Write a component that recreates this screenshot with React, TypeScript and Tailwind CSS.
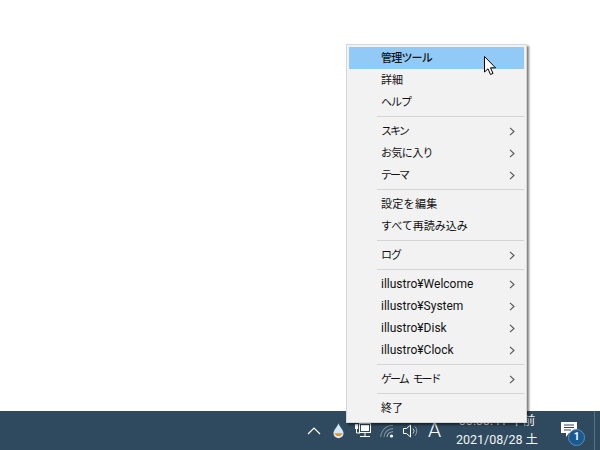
const FONT = "font-['Roboto','Noto_Sans_CJK_JP',sans-serif]";

type Item = { t: string; sub?: boolean; hl?: boolean; lat?: boolean; track?: string } | null;

const items: Item[] = [
  { t: "管理ツール", hl: true, track: "tracking-[-0.8px]" },
  { t: "詳細" },
  { t: "ヘルプ", track: "tracking-[-1px]" },
  null,
  { t: "スキン", sub: true, track: "tracking-[-2px]" },
  { t: "お気に入り", sub: true, track: "tracking-[-0.6px]" },
  { t: "テーマ", sub: true, track: "tracking-[-2px]" },
  null,
  { t: "設定を編集", track: "tracking-[0.3px]" },
  { t: "すべて再読み込み" },
  null,
  { t: "ログ", sub: true, track: "tracking-[-1px]" },
  null,
  { t: "illustro¥Welcome", sub: true, lat: true },
  { t: "illustro¥System", sub: true, lat: true },
  { t: "illustro¥Disk", sub: true, lat: true },
  { t: "illustro¥Clock", sub: true, lat: true },
  null,
  { t: "ゲーム モード", sub: true, track: "tracking-[-2px] [word-spacing:4px]" },
  null,
  { t: "終了" },
];

function Chevron() {
  return (
    <svg width="6" height="9" viewBox="0 0 6 9" fill="none" className="mr-[9px] shrink-0">
      <path d="M1 .8 L5 4.5 L1 8.2" stroke="#555" strokeWidth="1.1" />
    </svg>
  );
}

function Menu() {
  return (
    <div className="absolute left-[346px] top-[44px] w-[181px] h-[379px] bg-[#f2f2f2] border border-[#d6d6d6] p-[2px] shadow-[2px_2px_2px_rgba(0,0,0,0.5)] text-[#111]">
      {items.map((it, i) =>
        it === null ? (
          <div key={i} className="h-[7px] flex items-center pl-[28px]">
            <div className="h-px w-full bg-[#d4d4d4]" />
          </div>
        ) : (
          <div
            key={i}
            className={`h-[22px] flex items-center justify-between pl-[32px] ${it.hl ? "bg-[#91c9f7]" : ""}`}
          >
            <span
              className={`leading-none whitespace-nowrap ${it.lat ? "text-[12px]" : "text-[11px] pt-[1px]"} ${it.hl ? "font-medium" : ""} ${it.track ?? ""}`}
            >
              {it.t}
            </span>
            {it.sub && <Chevron />}
          </div>
        )
      )}
    </div>
  );
}

function Cursor() {
  return (
    <svg width="14" height="20" viewBox="0 0 14 20" className="absolute left-[484px] top-[56px]">
      <path d="M.5 .5 V16 L4 12.8 L6.5 18.5 L9 17.4 L6.5 11.8 H11.5 Z" fill="#fff" stroke="#000" strokeWidth="1" />
    </svg>
  );
}

function Tray() {
  return (
    <div className="flex items-center h-[39px] text-white">
      <svg width="14" height="8" viewBox="0 0 14 8" fill="none" className="ml-[307px]">
        <path d="M1 7 L7 1 L13 7" stroke="#fff" strokeWidth="1.2" />
      </svg>
      <svg width="11" height="16" viewBox="0 0 12 17" className="ml-[12px] mt-[1px]">
        <path d="M6 0 C7 4 11.5 7 11.5 11 A5.5 5.5 0 0 1 .5 11 C.5 7 5 4 6 0 Z" fill="#d6e6f5" />
        <path d="M1.8 11 H10.2 A4.4 4.4 0 0 1 1.8 11 Z" fill="#e8921e" />
      </svg>
      <svg width="17" height="16" viewBox="0 0 17 16" fill="none" className="ml-[10px]">
        <rect x="5.5" y=".5" width="11" height="9" stroke="#fff" />
        <rect x="7" y="2" width="8" height="6" fill="#fff" />
        <path d="M11 10 V13 M6 13.5 H16" stroke="#fff" />
        <rect x="1" y="1" width="3" height="5" fill="#fff" />
        <path d="M2.5 6 V10 H6" stroke="#fff" />
      </svg>
      <svg width="16" height="14" viewBox="0 0 16 14" fill="none" className="ml-[9px]">
        <path d="M.8 13 A12 12 0 0 1 13 1.2" stroke="#7d8d9a" strokeWidth="1.1" />
        <path d="M4 13 A9 9 0 0 1 13 4.6" stroke="#7d8d9a" strokeWidth="1.1" />
        <path d="M7 13 A6 6 0 0 1 13 7.8" stroke="#a9b4bd" strokeWidth="1.1" />
        <circle cx="11.5" cy="12" r="1.6" fill="#fff" />
      </svg>
      <svg width="16" height="14" viewBox="0 0 16 14" fill="none" className="ml-[7px]">
        <path d="M.5 4.5 H3.5 L7.5 1 V13 L3.5 9.5 H.5 Z" stroke="#fff" />
        <path d="M10 4.5 A3.5 3.5 0 0 1 10 9.5" stroke="#c5ccd2" />
        <path d="M12 2.5 A6.5 6.5 0 0 1 12 11.5" stroke="#8f9ca7" />
      </svg>
      <span className="ml-[7px] w-[17px] text-center text-[21px] leading-none font-light">A</span>
      <div className="ml-[10px] w-[88px] flex flex-col items-center text-[12.5px] leading-[19px] text-[#f2f5f7] -mt-[2px]">
        <span className="whitespace-nowrap">00:33:41 午前</span>
        <span className="whitespace-nowrap">2021/08/28 土</span>
      </div>
      <div className="relative ml-[17px] w-[22px] h-[24px]">
        <svg width="16" height="15" viewBox="0 0 16 15" className="absolute left-[3px] top-[3px]">
          <path d="M0 0 H16 V11 H8 L5 15 V11 H0 Z" fill="#fff" />
          <path d="M3 3 H13 M3 5.5 H13 M3 8 H10" stroke="#2f4a60" />
        </svg>
        <span className="absolute left-[10px] top-[10px] w-[17px] h-[17px] rounded-full bg-[#1a5a93] border border-[#5f8fb5] flex items-center justify-center text-[10px] font-bold leading-none">1</span>
      </div>
      <div className="ml-[14px] h-full w-px bg-[#5a7184]" />
    </div>
  );
}

export default function App() {
  return (
    <div className={`relative w-[600px] h-[450px] overflow-hidden bg-white flex flex-col justify-end ${FONT}`}>
      <div className="bg-[#2f4a5f]">
        <Tray />
      </div>
      <Menu />
      <Cursor />
    </div>
  );
}
